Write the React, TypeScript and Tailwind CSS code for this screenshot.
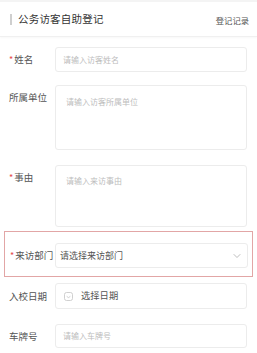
import React from 'react';

const font = { fontFamily: '"Noto Sans CJK SC", "Noto Sans", sans-serif' };

function Label({ text, required, width = 'w-[46px]' }: { text: string; required?: boolean; width?: string }) {
  return (
    <div className={`${width} h-[25px] flex items-center shrink-0 text-[9.5px] text-[#555] whitespace-nowrap`}>
      {required && <span className="text-[#e64a4a] text-[9px] mr-[1px]">*</span>}
      {text}
    </div>
  );
}

export default function App() {
  return (
    <div className="w-[257px] h-[353px] bg-white overflow-hidden" style={font}>
      {/* Header */}
      <div className="h-[37px] flex items-center justify-between border-t-[2px] border-t-[#f4f4f4] border-b border-b-[#f0f0f0] shadow-[0_1px_2px_rgba(0,0,0,0.03)]">
        <div className="flex items-center">
          <div className="w-[2px] h-[11px] bg-[#cfcfcf] ml-[10px] mr-[6px]" />
          <span className="text-[10.5px] text-[#333] tracking-[0.2px]">公务访客自助登记</span>
        </div>
        <span className="text-[8.3px] text-[#555] mr-[8px] mt-[3px]">登记记录</span>
      </div>

      {/* 姓名 */}
      <div className="flex pl-[9px] pr-[10px] mt-[10px]">
        <Label text="姓名" required />
        <div className="flex-1 h-[25px] border border-[#ececec] rounded-[3px] flex items-center pl-[7px] text-[8px] text-[#bdbdbd]">
          请输入访客姓名
        </div>
      </div>

      {/* 所属单位 */}
      <div className="flex pl-[9px] pr-[10px] mt-[13px]">
        <Label text="所属单位" />
        <div className="flex-1 h-[65px] border border-[#ececec] rounded-[3px] pl-[10px] pt-[10px] text-[8px] text-[#bdbdbd]">
          请输入访客所属单位
        </div>
      </div>

      {/* 事由 */}
      <div className="flex pl-[9px] pr-[10px] mt-[15px]">
        <Label text="事由" required />
        <div className="flex-1 h-[62px] border border-[#ececec] rounded-[3px] pl-[10px] pt-[9px] text-[8px] text-[#bdbdbd]">
          请输入来访事由
        </div>
      </div>

      {/* 来访部门 (highlighted) */}
      <div className="flex mx-[4px] pl-[5px] pr-[4px] mt-[4px] pt-[11px] pb-[8px] border border-[#e2a6a6]">
        <Label text="来访部门" required width="w-[45px]" />
        <div className="flex-1 h-[25px] border border-[#ececec] rounded-[3px] flex items-center justify-between pl-[4px] pr-[6px] text-[9px] text-[#555]">
          <span>请选择来访部门</span>
          <svg width="8" height="6" viewBox="0 0 8 6" fill="none">
            <path d="M1 1.5 L4 4.5 L7 1.5" stroke="#b5b5b5" strokeWidth="0.9" strokeLinecap="round" strokeLinejoin="round" />
          </svg>
        </div>
      </div>

      {/* 入校日期 */}
      <div className="flex pl-[9px] pr-[10px] mt-[6px]">
        <div className="h-[26px] flex items-center">
          <Label text="入校日期" />
        </div>
        <div className="flex-1 h-[26px] border border-[#ececec] rounded-[3px] flex items-center pl-[8px] text-[9.3px] text-[#555]">
          <svg width="9" height="9" viewBox="0 0 9 9" fill="none" className="mr-[8px]">
            <rect x="0.5" y="0.5" width="8" height="8" rx="2" stroke="#c4c4c4" strokeWidth="0.8" />
            <path d="M3 4.6 L4.5 5.6 L6 4.6" stroke="#c4c4c4" strokeWidth="0.8" strokeLinecap="round" />
          </svg>
          选择日期
        </div>
      </div>

      {/* 车牌号 */}
      <div className="flex pl-[9px] pr-[10px] mt-[15px]">
        <Label text="车牌号" />
        <div className="flex-1 h-[24px] border border-[#ececec] rounded-[3px] flex items-center pl-[7px] text-[8px] text-[#bdbdbd]">
          请输入车牌号
        </div>
      </div>
    </div>
  );
}
